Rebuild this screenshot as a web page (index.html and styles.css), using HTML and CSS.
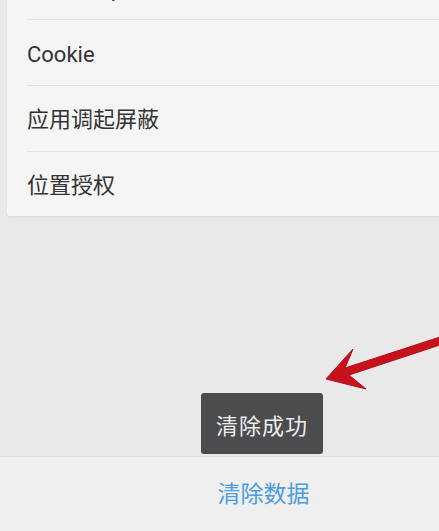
FILE: index.html
```html
<!DOCTYPE html>
<html lang="zh-CN">
<head>
<meta charset="utf-8">
<title>清除数据</title>
<link rel="stylesheet" href="styles.css">
</head>
<body>
<div class="page">
  <main class="content">
    <section class="card">
      <div class="row latin"><span>JavaScript</span></div>
      <div class="row latin"><span>Cookie</span></div>
      <div class="row cjk"><span>应用调起屏蔽</span></div>
      <div class="row cjk last"><span>位置授权</span></div>
    </section>
  </main>
  <footer class="footer">
    <button class="clear-btn">清除数据</button>
  </footer>
  <div class="toast">清除成功</div>
  <svg class="arrow" width="439" height="531" viewBox="0 0 439 531">
    <path d="M326 379 L353 349 L345 368 L440 337 L440 345 L349 375 L366 389 Z" fill="#c8121b" stroke="#b30f17" stroke-width="1" stroke-linejoin="round"/>
  </svg>
</div>
</body>
</html>
```
FILE: styles.css
```css
html, body {
  margin: 0;
  padding: 0;
}
body {
  background: #e9e9e9;
  font-family: "Roboto", "Noto Sans CJK SC", sans-serif;
  overflow: hidden;
}
.page {
  position: relative;
  width: 439px;
  height: 531px;
  display: flex;
  flex-direction: column;
}
.content {
  flex: 1;
  overflow: hidden;
}
.card {
  margin: -46px -10px 0 7px;
  background: #f5f5f5;
  border-radius: 3px;
  box-shadow: 0 1px 2px rgba(0,0,0,0.08);
}
.row {
  box-sizing: border-box;
  margin-left: 20px;
  height: 66px;
  border-bottom: 1px solid #e3e3e3;
  display: flex;
  align-items: center;
  font-size: 22px;
  color: #333;
}
.row.latin {
  padding-top: 3px;
}
.row.cjk {
  padding-bottom: 3px;
}
.row.last {
  border-bottom: none;
  height: 64px;
}
.footer {
  height: 74px;
  border-top: 1px solid #dcdcdc;
  background: #efefef;
  display: flex;
  align-items: center;
  justify-content: center;
  padding-left: 88px;
  padding-bottom: 4px;
  box-sizing: border-box;
  height: 75px;
}
.clear-btn {
  border: none;
  background: none;
  padding: 0;
  font-family: "Roboto", "Noto Sans CJK SC", sans-serif;
  font-size: 23px;
  color: #4a9de0;
}
.toast {
  position: absolute;
  left: 201px;
  top: 393px;
  height: 61px;
  padding: 0 15px;
  display: flex;
  align-items: center;
  background: #4b4c4e;
  border-radius: 3px;
  color: #ededed;
  font-size: 22px;
  letter-spacing: 1px;
}
.arrow {
  position: absolute;
  left: 0;
  top: 0;
  pointer-events: none;
}
```
